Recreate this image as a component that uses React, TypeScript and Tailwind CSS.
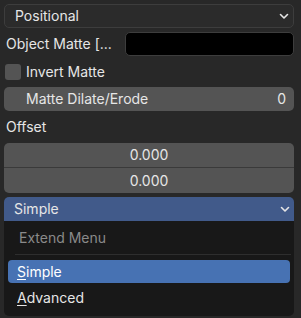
import React from "react";

const Chevron = () => (
  <svg width="10" height="7" viewBox="0 0 10 7" className="shrink-0">
    <path d="M1.5 1.5 L5 5 L8.5 1.5" fill="none" stroke="#e6e6e6" strokeWidth="1.6" strokeLinecap="round" strokeLinejoin="round" />
  </svg>
);

export default function App() {
  return (
    <div className="w-[301px] h-[318px] bg-[#282828] text-[#e6e6e6] font-['Inter',sans-serif] text-[14px] leading-none pl-[4px] pr-[7px] pt-[4px] flex flex-col overflow-hidden">
      {/* Positional dropdown */}
      <div className="h-[24px] rounded-[5px] bg-[#2b2b2b] border border-[#3d3d3d] flex items-center pl-[10px] pr-[4px] justify-between">
        <span>Positional</span>
        <Chevron />
      </div>
      {/* Object Matte */}
      <div className="mt-[4px] h-[24px] flex items-center">
        <span className="w-[121px] pl-[2px] whitespace-nowrap">Object Matte [...</span>
        <div className="flex-1 h-[24px] rounded-[5px] bg-black border border-[#3d3d3d]" />
      </div>
      {/* Invert Matte */}
      <div className="mt-[4px] h-[24px] flex items-center gap-[5px] pl-[1px]">
        <div className="w-[16px] h-[16px] rounded-[3px] bg-[#545454]" />
        <span>Invert Matte</span>
      </div>
      {/* Matte Dilate/Erode */}
      <div className="mt-[3px] h-[24px] rounded-[5px] bg-[#545454] flex items-center justify-between pl-[22px] pr-[8px]">
        <span>Matte Dilate/Erode</span>
        <span>0</span>
      </div>
      {/* Offset label */}
      <div className="mt-[2px] h-[28px] flex items-center pl-[2px]">
        <span>Offset</span>
      </div>
      {/* Offset fields */}
      <div className="mt-[2px] rounded-[5px] bg-[#545454] flex flex-col overflow-hidden">
        <div className="h-[25px] flex items-center justify-center border-b border-[#3a3a3a]">0.000</div>
        <div className="h-[25px] flex items-center justify-center">0.000</div>
      </div>
      {/* Simple dropdown + menu */}
      <div className="mt-[4px] h-[24px] rounded-t-[5px] bg-[#415a8a] flex items-center justify-between pl-[10px] pr-[4px]">
        <span>Simple</span>
        <Chevron />
      </div>
      <div className="h-[95px] rounded-b-[5px] bg-[#181818] flex flex-col px-[4px]">
        <div className="h-[33px] flex items-center pl-[11px] text-[#8a8a8a]">Extend Menu</div>
        <div className="mx-[7px] -mr-[1px] h-px bg-[#2e2e2e]" />
        <div className="mt-[5px] h-[23px] rounded-[4px] bg-[#4772b3] flex items-center pl-[9px] text-white">
          <span><span className="underline underline-offset-2">S</span>imple</span>
        </div>
        <div className="h-[30px] flex items-center pl-[9px]">
          <span><span className="underline underline-offset-2">A</span>dvanced</span>
        </div>
      </div>
    </div>
  );
}
